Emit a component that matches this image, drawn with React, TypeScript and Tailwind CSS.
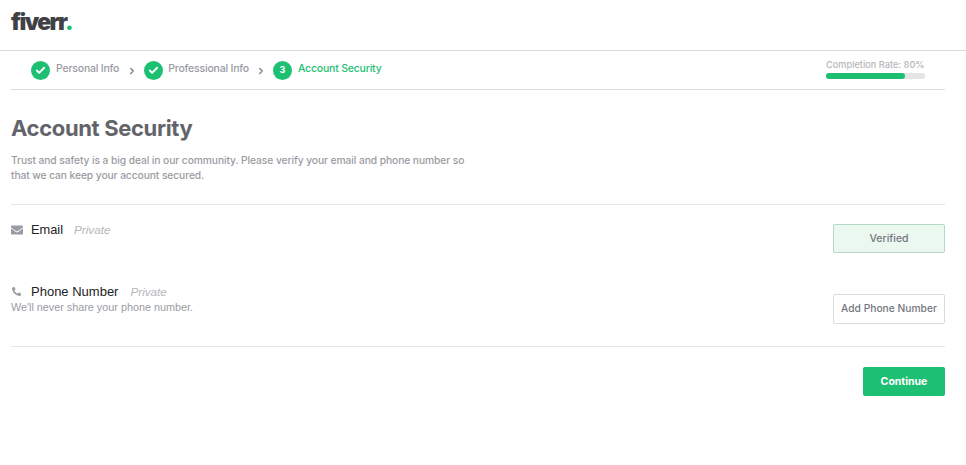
import { Check, ChevronRight } from "lucide-react";
import { FaEnvelope, FaPhoneAlt } from "react-icons/fa";

function StepIcon({ children }: { children: React.ReactNode }) {
  return (
    <span className="flex h-[19px] w-[19px] items-center justify-center rounded-full bg-[#1dbf73] text-[9px] font-bold text-white">
      {children}
    </span>
  );
}

function Step({ label, active, n, tight }: { label: string; active?: boolean; n?: string; tight?: boolean }) {
  return (
    <div className={tight ? "flex items-center gap-[5px]" : "flex items-center gap-[6px]"}>
      <StepIcon>{n ?? <Check size={11} strokeWidth={4} />}</StepIcon>
      <span className={active ? "-mt-[2px] text-[10.5px] font-medium tracking-[-0.2px] text-[#1dbf73]" : "-mt-[2px] text-[10.5px] font-medium tracking-[-0.2px] text-[#9a9ba3]"}>{label}</span>
    </div>
  );
}

export default function App() {
  return (
    <div className="min-h-[465px] bg-white font-['Inter',sans-serif]">
      <header className="flex h-[51px] items-start border-b border-[#dadbdd] pl-[11px] pt-[6px]">
        <span className="text-[23px] leading-[32px] font-black tracking-[-1.6px] text-[#404145]">
          fiverr<span className="text-[#1dbf73]">.</span>
        </span>
      </header>
      <div className="mx-[11px] w-[934px]">
        <div className="flex h-[39px] items-center justify-between border-b border-[#dadbdd] pl-5">
          <div className="flex items-center">
            <Step label="Personal Info" />
            <ChevronRight size={10} strokeWidth={3.5} className="mt-[2px] mr-[7px] ml-[8px] text-[#85868c]" />
            <Step label="Professional Info" tight />
            <ChevronRight size={10} strokeWidth={3.5} className="mx-[7px] mt-[2px] text-[#85868c]" />
            <Step label="Account Security" active n="3" />
          </div>
          <div className="-mt-[2px] mr-5 w-[99px]">
            <div className="text-[9.2px] leading-[12px] font-medium whitespace-nowrap text-[#b5b6ba]">Completion Rate: 80%</div>
            <div className="mt-[2px] h-[6px] rounded-full bg-[#e4e5e7]">
              <div className="h-full w-[79px] rounded-full bg-[#1dbf73]" />
            </div>
          </div>
        </div>
        <h1 className="mt-[24px] text-[22px] leading-[28px] font-bold tracking-[-0.35px] text-[#62646a]">Account Security</h1>
        <p className="mt-[11px] w-[460px] text-[10.25px] leading-[15px] font-medium tracking-[-0.08px] text-[#9a9ba3]">
          Trust and safety is a big deal in our community. Please verify your email and phone number so that we can keep your account secured.
        </p>
        <div className="mt-[21px] flex h-[62px] items-start justify-between border-t border-[#e4e5e7] pt-[19px]">
          <div className="flex items-center">
            <FaEnvelope size={12} className="text-[#9a9ba3]" />
            <span className="ml-[8px] font-['Liberation_Sans',sans-serif] text-[12.8px] leading-[12px] text-[#222325]">Email</span>
            <span className="ml-[11px] font-['Liberation_Sans',sans-serif] text-[11.7px] leading-[12px] text-[#b5b6ba] italic">Private</span>
          </div>
          <div className="flex h-[29px] w-[112px] items-center justify-center rounded-[2px] border border-[#b7d8c4] bg-[#ebf8f0] text-[10.5px] font-medium text-[#74767e]">
            Verified
          </div>
        </div>
        <div className="flex h-[80px] items-start justify-between pt-[28px]">
          <div className="-mt-[10px]">
            <div className="flex items-center">
              <FaPhoneAlt size={9} className="mr-[10px] ml-[1px] text-[#9a9ba3]" />
              <span className="font-['Liberation_Sans',sans-serif] text-[13px] leading-[15px] text-[#222325]">Phone Number</span>
              <span className="ml-[12px] font-['Liberation_Sans',sans-serif] text-[11.7px] leading-[15px] text-[#b5b6ba] italic">Private</span>
            </div>
            <div className="mt-[2px] font-['Liberation_Sans',sans-serif] text-[10.8px] leading-[13px] text-[#9a9ba3]">We'll never share your phone number.</div>
          </div>
          <div className="flex h-[30px] w-[112px] items-center justify-center rounded-[2px] border border-[#dadbdd] text-[10.25px] font-medium whitespace-nowrap text-[#74767e]">
            Add Phone Number
          </div>
        </div>
        <div className="flex justify-end border-t border-[#e4e5e7] pt-5">
          <button className="h-[29px] w-[82px] rounded-[2px] bg-[#1dbf73] text-[10.5px] font-bold text-white">Continue</button>
        </div>
      </div>
    </div>
  );
}
